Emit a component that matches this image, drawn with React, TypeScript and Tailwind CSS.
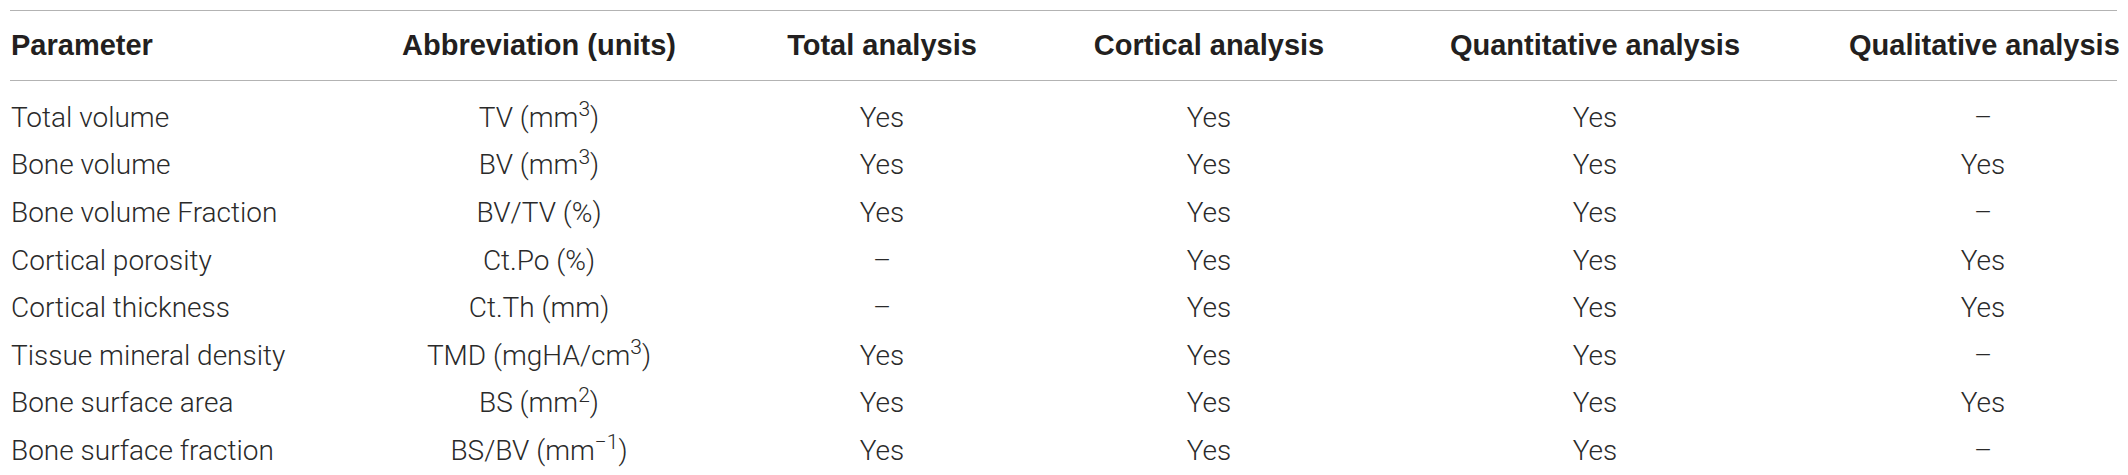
import { ReactNode } from 'react';

type Row = {
  param: string;
  abbr: ReactNode;
  total: string;
  cortical: string;
  quant: string;
  qual: string;
};

const rows: Row[] = [
  { param: 'Total volume', abbr: <>TV (mm<sup>3</sup>)</>, total: 'Yes', cortical: 'Yes', quant: 'Yes', qual: '–' },
  { param: 'Bone volume', abbr: <>BV (mm<sup>3</sup>)</>, total: 'Yes', cortical: 'Yes', quant: 'Yes', qual: 'Yes' },
  { param: 'Bone volume Fraction', abbr: 'BV/TV (%)', total: 'Yes', cortical: 'Yes', quant: 'Yes', qual: '–' },
  { param: 'Cortical porosity', abbr: 'Ct.Po (%)', total: '–', cortical: 'Yes', quant: 'Yes', qual: 'Yes' },
  { param: 'Cortical thickness', abbr: 'Ct.Th (mm)', total: '–', cortical: 'Yes', quant: 'Yes', qual: 'Yes' },
  { param: 'Tissue mineral density', abbr: <>TMD (mgHA/cm<sup>3</sup>)</>, total: 'Yes', cortical: 'Yes', quant: 'Yes', qual: '–' },
  { param: 'Bone surface area', abbr: <>BS (mm<sup>2</sup>)</>, total: 'Yes', cortical: 'Yes', quant: 'Yes', qual: 'Yes' },
  { param: 'Bone surface fraction', abbr: <>BS/BV (mm<sup>−1</sup>)</>, total: 'Yes', cortical: 'Yes', quant: 'Yes', qual: '–' },
];

// column boxes, centres taken from the reference
const cols = [
  'w-[389px] pl-[1px]',
  'w-[280px] text-center',
  'ml-[103px] w-[200px] text-center',
  'ml-[107px] w-[240px] text-center',
  'ml-[116px] w-[300px] text-center',
  'ml-[104px] w-[268px] text-center',
];

const headers = [
  'Parameter',
  'Abbreviation (units)',
  'Total analysis',
  'Cortical analysis',
  'Quantitative analysis',
  'Qualitative analysis',
];

export default function App() {
  return (
    <div className="w-[2128px] h-[475px] bg-white pt-[10px] pl-[10px] text-[#231f20]">
      <div className="w-[2107px]">
        <div className="h-[71px] flex items-center border-t border-b border-[#b3b3b3] font-['Liberation_Sans',Arial,sans-serif] font-bold text-[29px]">
          {headers.map((h, i) => (
            <div key={h} className={`${cols[i]} whitespace-nowrap`}>
              {h}
            </div>
          ))}
        </div>
        <div className="pt-[13px] font-['Roboto',sans-serif] font-light text-[28px] text-[#2a2a2a]">
          {rows.map((r) => (
            <div key={r.param} className="h-[47.6px] flex items-center whitespace-nowrap">
              <div className={cols[0]}>{r.param}</div>
              <div className={cols[1]}>{r.abbr}</div>
              <div className={cols[2]}>{r.total}</div>
              <div className={cols[3]}>{r.cortical}</div>
              <div className={cols[4]}>{r.quant}</div>
              <div className={cols[5]}>{r.qual}</div>
            </div>
          ))}
        </div>
      </div>
    </div>
  );
}
